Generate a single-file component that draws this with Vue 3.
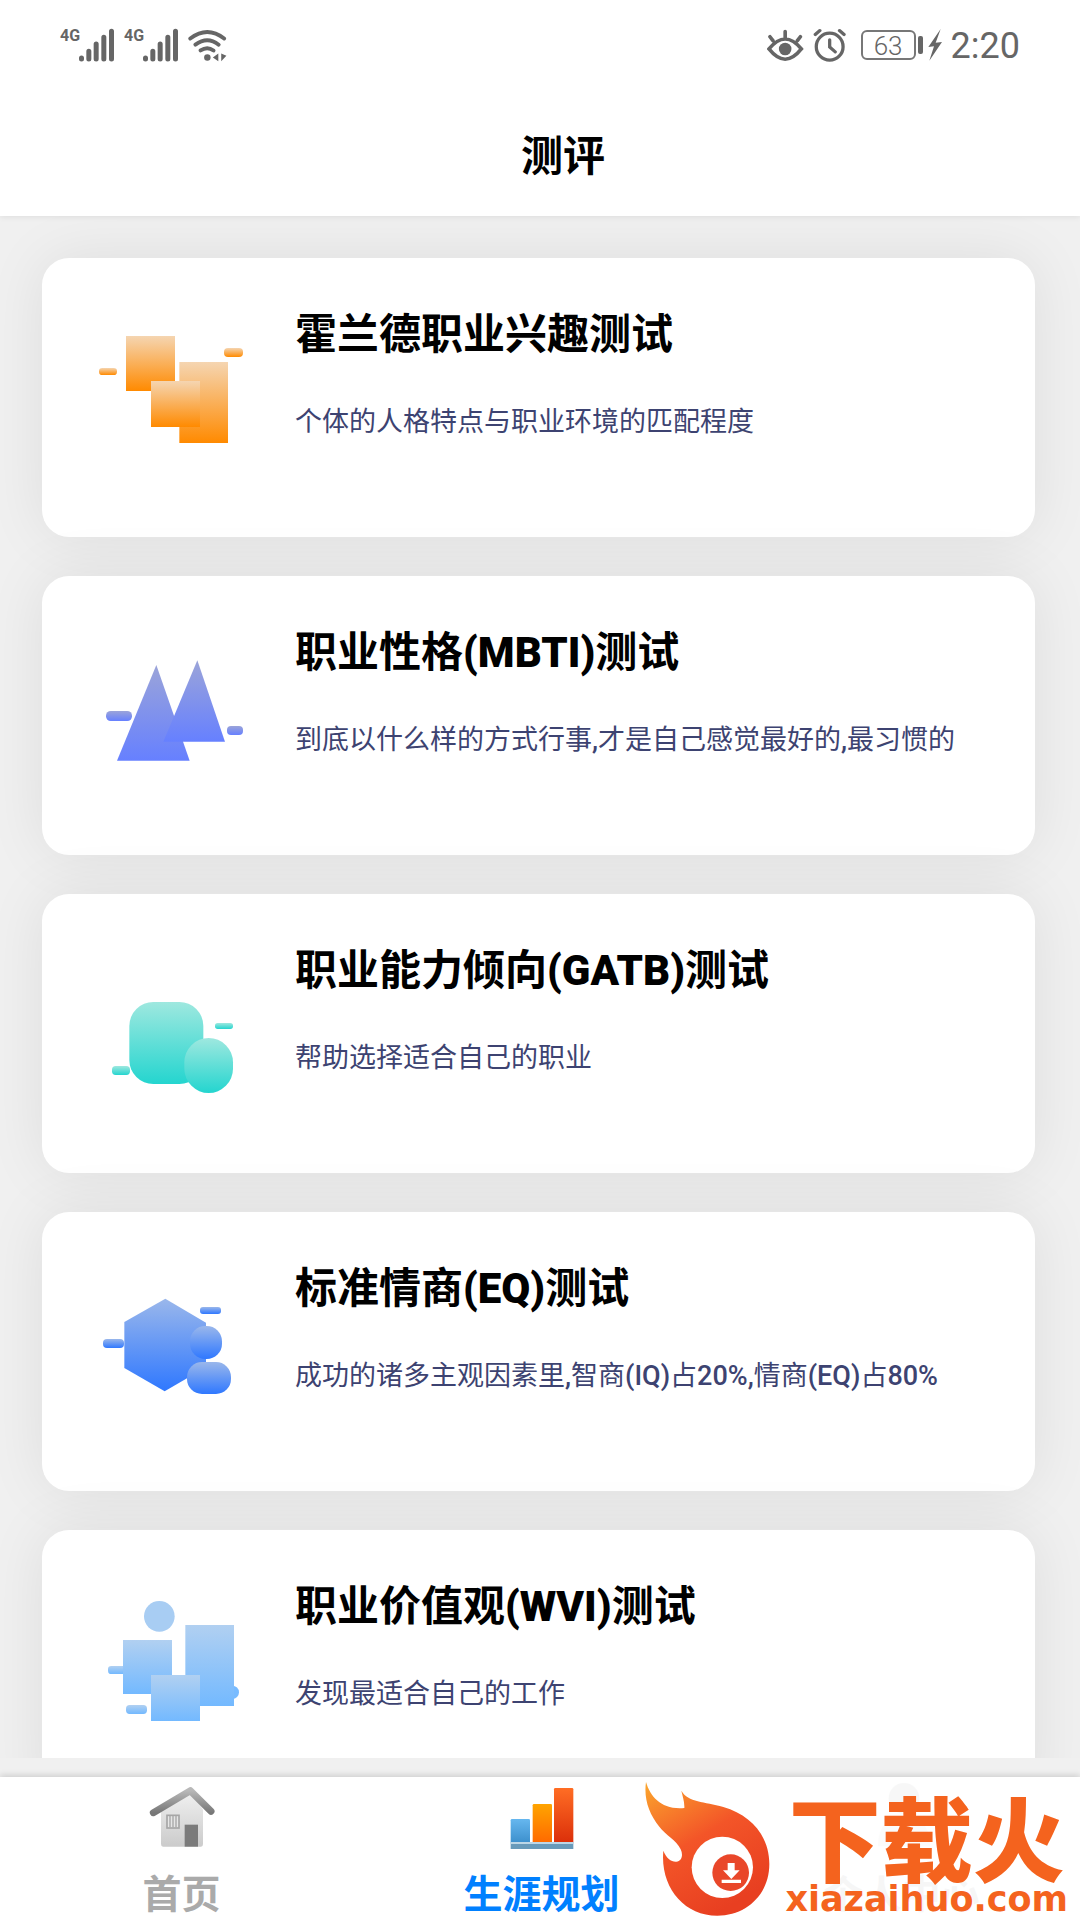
<script setup>
import { ref } from 'vue'

const tests = [
  { icon: 'holland', title: '霍兰德职业兴趣测试', desc: '个体的人格特点与职业环境的匹配程度' },
  { icon: 'mbti', title: '职业性格(MBTI)测试', desc: '到底以什么样的方式行事,才是自己感觉最好的,最习惯的' },
  { icon: 'gatb', title: '职业能力倾向(GATB)测试', desc: '帮助选择适合自己的职业' },
  { icon: 'eq', title: '标准情商(EQ)测试', desc: '成功的诸多主观因素里,智商(IQ)占20%,情商(EQ)占80%' },
  { icon: 'wvi', title: '职业价值观(WVI)测试', desc: '发现最适合自己的工作' },
]

const tabs = [
  { key: 'home', label: '首页' },
  { key: 'career', label: '生涯规划' },
  { key: 'mine', label: '个人中心' },
]

const activeTab = ref('career')

// latin letters and digits are set heavier than the Chinese text around them
function splitText(text) {
  return text.match(/[\x20-\x7e]+|[^\x20-\x7e]+/g).map((part) => ({
    text: part,
    latin: /^[\x20-\x7e]/.test(part),
  }))
}
</script>

<template>
  <div class="page">
    <header class="header">
      <div class="status-bar">
        <div class="status-group">
          <div v-for="n in 2" :key="n" class="signal">
            <span class="network">4G</span>
            <svg class="bars" viewBox="0 0 108 102" stroke="#666" stroke-width="15" stroke-linecap="round">
              <path d="M9 90v3M31 70v23M53 48v45M76 28v65M99 10v83" />
            </svg>
          </div>
          <svg class="wifi" viewBox="442 50 124 104" fill="none" stroke="#666" stroke-width="12" stroke-linecap="round">
            <path d="M449 82q53-40 105 0M465 101q37-27 72 0M481 119q21-14 40 0" />
            <circle cx="502" cy="141" r="10" fill="#666" stroke="none" />
            <path d="M536 128v24l-17-11zM545 128v24l16-17z" fill="#666" stroke="none" />
          </svg>
        </div>
        <div class="status-group right">
          <svg class="eye" viewBox="74 54 112 102" fill="none" stroke="#666" stroke-width="11" stroke-linecap="round">
            <path d="M80 117q49-60 98 0q-49 62-98 0zM129 64v20M83 80l9 12M175 80l-9 12" />
            <circle cx="129" cy="117" r="19" fill="#666" stroke="none" />
          </svg>
          <svg class="alarm" viewBox="218 54 102 104" fill="none" stroke="#666" stroke-width="10" stroke-linecap="round">
            <circle cx="268" cy="111" r="41" />
            <path d="M268 90v22l17 15M224 74l14-12M298 62l14 12" />
          </svg>
          <span class="battery">
            <span class="battery-level">63</span>
            <span class="battery-tip"></span>
          </span>
          <svg class="bolt" viewBox="566 58 42 96">
            <path d="M604 58l-37 54 17-2-14 43 38-56-19 2z" fill="#666" />
          </svg>
          <span class="clock">2:20</span>
        </div>
      </div>
      <h1 class="page-title">测评</h1>
    </header>

    <main class="test-list">
      <article v-for="item in tests" :key="item.icon" class="test-card">
        <svg v-if="item.icon === 'holland'" class="test-icon" viewBox="0 0 540 540">
          <defs>
            <linearGradient id="orange" x2="0" y2="1">
              <stop offset="0" stop-color="#f5d5b1" />
              <stop offset="1" stop-color="#ff8a00" />
            </linearGradient>
          </defs>
          <g fill="url(#orange)" transform="translate(-30 6)">
            <rect x="138" y="78" width="147" height="165" />
            <rect x="298" y="156" width="146" height="243" />
            <rect x="213" y="213" width="147" height="138" />
            <rect x="57" y="174" width="54" height="21" rx="10" />
            <rect x="432" y="114" width="57" height="27" rx="12" />
          </g>
        </svg>
        <svg v-else-if="item.icon === 'mbti'" class="test-icon" viewBox="0 0 540 540">
          <defs>
            <linearGradient id="violet" x2="0" y2="1">
              <stop offset="0" stop-color="#9ba4d9" />
              <stop offset="1" stop-color="#6680ff" />
            </linearGradient>
          </defs>
          <g fill="url(#violet)" transform="translate(0 42)">
            <path d="M199 75l100 287H81z" />
            <path d="M322 61l83 244H220z" />
            <rect x="48" y="213" width="78" height="30" rx="14" />
            <rect x="411" y="258" width="48" height="27" rx="12" />
          </g>
        </svg>
        <svg v-else-if="item.icon === 'gatb'" class="test-icon" viewBox="0 0 540 540">
          <defs>
            <linearGradient id="teal" x2="0" y2="1">
              <stop offset="0" stop-color="#9ee8df" />
              <stop offset="1" stop-color="#24d5cf" />
            </linearGradient>
          </defs>
          <g fill="url(#teal)" transform="translate(0 108)">
            <rect x="118" y="66" width="222" height="246" rx="72" />
            <rect x="283" y="174" width="146" height="165" rx="73" />
            <rect x="375" y="129" width="54" height="18" rx="8" />
            <rect x="66" y="258" width="54" height="27" rx="11" />
          </g>
        </svg>
        <svg v-else-if="item.icon === 'eq'" class="test-icon" viewBox="0 0 540 540">
          <defs>
            <linearGradient id="blue" x2="0" y2="1">
              <stop offset="0" stop-color="#9ab7eb" />
              <stop offset="1" stop-color="#2f78ff" />
            </linearGradient>
          </defs>
          <g fill="url(#blue)" transform="translate(0 54)">
            <path d="M226 56l122 72v134l-124 72-121-70V126z" />
            <rect x="300" y="138" width="96" height="99" rx="46" />
            <rect x="291" y="246" width="132" height="96" rx="45" />
            <rect x="330" y="81" width="63" height="21" rx="9" />
            <rect x="39" y="177" width="63" height="27" rx="12" />
          </g>
        </svg>
        <svg v-else class="test-icon" viewBox="0 0 540 540">
          <defs>
            <linearGradient id="sky" x2="0" y2="1">
              <stop offset="0" stop-color="#b1d0f1" />
              <stop offset="1" stop-color="#73b9ff" />
            </linearGradient>
          </defs>
          <circle cx="208" cy="109" r="46" fill="#a8cdf3" />
          <circle cx="427" cy="337" r="20" fill="#78bbff" />
          <g fill="url(#sky)">
            <rect x="54" y="258" width="66" height="24" rx="10" />
            <rect x="99" y="180" width="147" height="162" />
            <rect x="286" y="135" width="146" height="243" />
            <rect x="183" y="285" width="147" height="138" />
            <rect x="108" y="375" width="63" height="27" rx="11" />
          </g>
        </svg>
        <div class="test-info">
          <h2 class="test-title">
            <span v-for="(part, i) in splitText(item.title)" :key="i" :class="{ latin: part.latin }">{{ part.text }}</span>
          </h2>
          <p class="test-desc">
            <span v-for="(part, i) in splitText(item.desc)" :key="i" :class="{ latin: part.latin }">{{ part.text }}</span>
          </p>
        </div>
      </article>
    </main>

    <nav class="tab-bar">
      <button
        v-for="tab in tabs"
        :key="tab.key"
        class="tab"
        :class="{ active: activeTab === tab.key, faded: tab.key === 'mine' }"
        @click="activeTab = tab.key"
      >
        <svg v-if="tab.key === 'home'" class="tab-icon" viewBox="0 0 204 204">
          <defs>
            <linearGradient id="wall" x2="0" y2="1">
              <stop offset="0" stop-color="#f2f2f2" />
              <stop offset="1" stop-color="#cbcbcb" />
            </linearGradient>
            <linearGradient id="roof" x2="0" y2="1">
              <stop offset="0" stop-color="#b8b8b8" />
              <stop offset="1" stop-color="#777" />
            </linearGradient>
          </defs>
          <path d="M39 80l88-60 38 60v103q0 8-6 8H45q-6 0-6-8z" fill="url(#wall)" />
          <path d="M16 89L127 23l62 62" fill="none" stroke="url(#roof)" stroke-width="21" stroke-linecap="round" stroke-linejoin="round" />
          <rect x="110" y="125" width="40" height="66" fill="#7b7b7b" />
          <rect x="57" y="97" width="36" height="38" fill="#e6e6e6" stroke="#a6a6a6" stroke-width="5" />
          <path d="M66 99v34M75 99v34M84 99v34" stroke="#a6a6a6" stroke-width="4" />
        </svg>
        <svg v-else-if="tab.key === 'career'" class="tab-icon" viewBox="0 0 204 204">
          <defs>
            <linearGradient id="bar-low" x2="0" y2="1">
              <stop offset="0" stop-color="#66b7ef" />
              <stop offset="1" stop-color="#3c8fcc" />
            </linearGradient>
            <linearGradient id="bar-mid" x2="0" y2="1">
              <stop offset="0" stop-color="#ffa400" />
              <stop offset="1" stop-color="#ff6900" />
            </linearGradient>
            <linearGradient id="bar-high" x2="0" y2="1">
              <stop offset="0" stop-color="#ff6d24" />
              <stop offset="1" stop-color="#db2f0a" />
            </linearGradient>
          </defs>
          <rect x="8" y="108" width="58" height="72" rx="4" fill="url(#bar-low)" />
          <rect x="74" y="63" width="58" height="117" rx="4" fill="url(#bar-mid)" />
          <rect x="138" y="15" width="58" height="165" rx="4" fill="url(#bar-high)" />
          <rect x="8" y="177" width="188" height="21" fill="#689aba" />
          <rect x="8" y="177" width="188" height="6" fill="#bcd6e6" />
        </svg>
        <svg v-else class="tab-icon" viewBox="0 0 204 204">
          <circle cx="108" cy="46" r="46" fill="#bbb" />
          <path d="M30 190q0-88 78-88t78 88z" fill="#ddd" />
        </svg>
        <span>{{ tab.label }}</span>
      </button>

      <div class="brand">
        <svg class="brand-flame" viewBox="60 120 384 408">
          <defs>
            <linearGradient id="flame" x1="0" y1="0" x2=".55" y2="1">
              <stop offset="0" stop-color="#fba62d" />
              <stop offset=".5" stop-color="#f35528" />
              <stop offset="1" stop-color="#e83f21" />
            </linearGradient>
          </defs>
          <path
            d="M69 123C82 168 116 207 184 201C185 181 178 164 175 149C196 185 244 181 301 198C384 222 439 285 439 369C439 460 370 524 283 524C181 524 111 436 121 329C130 352 145 363 160 362C177 360 181 341 173 325C160 296 128 283 109 257C77 218 62 172 69 123z"
            fill="url(#flame)"
          />
          <circle cx="298" cy="379" r="92" fill="#fff" />
          <circle cx="323" cy="395" r="55" fill="#e9472a" />
          <path d="M314 366h21v22h15l-25 26-25-26h14zM296 416h58v10h-58z" fill="#fff" />
        </svg>
        <div class="brand-text">
          <span class="brand-name">下载火</span>
          <span class="brand-site">xiazaihuo.com</span>
        </div>
      </div>
    </nav>
  </div>
</template>

<style>
body {
  margin: 0;
  background: #f0f0f0;
}
</style>

<style scoped>
.page {
  height: 100vh;
  display: flex;
  flex-direction: column;
  overflow: hidden;
  background: #f0f0f0;
  font-family: Roboto, 'Noto Sans CJK SC', sans-serif;
}
.header {
  position: relative;
  z-index: 1;
  background: #fff;
  padding-bottom: 26px;
  box-shadow: 0 1px 6px rgba(0, 0, 0, 0.08);
}
.status-bar {
  display: flex;
  justify-content: space-between;
  height: 90px;
  padding: 0 60px;
  color: #666;
}
.status-group {
  display: flex;
  align-items: center;
  gap: 9px;
}
.signal {
  display: flex;
  align-items: flex-start;
}
.network {
  width: 18px;
  font-family: 'Liberation Sans Narrow', Roboto, sans-serif;
  font-size: 16px;
  line-height: 16px;
  font-weight: 700;
}
.bars { width: 37px; height: 34px; }
.wifi { width: 40px; height: 34px; }
.eye { width: 37px; height: 34px; }
.alarm { width: 34px; height: 34px; margin-right: 5px; }
.battery {
  display: flex;
  align-items: center;
  gap: 2px;
}
.battery-level {
  width: 51px;
  height: 26px;
  border: 2px solid #777;
  border-radius: 6px;
  font-size: 26px;
  line-height: 28px;
  font-weight: 300;
  text-align: center;
}
.battery-tip {
  width: 5px;
  height: 18px;
  border-radius: 2px;
  background: #666;
}
.bolt { width: 14px; height: 32px; margin-left: -4px; }
.clock {
  font-size: 36px;
  line-height: 40px;
  font-weight: 400;
  padding-top: 2px;
}
.page-title {
  margin: 0;
  padding: 34px 0 0 46px;
  font-size: 42px;
  line-height: 66px;
  font-weight: 700;
  text-align: center;
}
.test-list {
  flex: 1;
  min-height: 0;
  overflow: hidden;
  display: flex;
  flex-direction: column;
  gap: 39px;
  padding: 42px 45px 0 42px;
  margin-bottom: 19px;
}
.test-card {
  flex: none;
  display: flex;
  gap: 24px;
  box-sizing: border-box;
  height: 279px;
  padding: 50px 48px 0;
  background: #fff;
  border-radius: 27px;
  box-shadow: 0 0 60px rgba(0, 0, 0, 0.08);
}
.test-icon {
  flex: none;
  width: 180px;
  height: 180px;
}
.test-info {
  min-width: 0;
  padding: 2px 0 0 1px;
  white-space: nowrap;
}
.test-title {
  margin: 0 0 42px;
  font-size: 42px;
  line-height: 50px;
  font-weight: 700;
  color: #000;
}
.test-title .latin { font-weight: 900; }
.test-desc {
  margin: 0;
  font-size: 27px;
  line-height: 40px;
  font-weight: 400;
  color: #3d4371;
}
.test-desc .latin { font-weight: 500; }
.tab-bar {
  position: relative;
  display: flex;
  height: 143px;
  background: #fff;
  box-shadow: 0 -2px 6px rgba(0, 0, 0, 0.14);
}
.tab {
  flex: 1;
  display: flex;
  flex-direction: column;
  align-items: center;
  gap: 20px;
  padding: 6px 0 0 3px;
  border: none;
  background: none;
  color: #aaa;
  font-family: inherit;
  font-size: 39px;
  line-height: 48px;
  font-weight: 700;
  cursor: pointer;
}
.tab.active { color: #0080ff; }
.tab.faded { opacity: 0.1; }
.tab-icon { width: 68px; height: 68px; }
.brand {
  position: absolute;
  right: 12px;
  bottom: 3px;
  display: flex;
  align-items: flex-end;
  gap: 14px;
  color: #f4631e;
  pointer-events: none;
}
.brand-flame { width: 128px; height: 136px; }
.brand-text {
  display: flex;
  flex-direction: column;
  align-items: center;
}
.brand-name {
  font-family: 'Noto Sans CJK SC', sans-serif;
  font-size: 92px;
  line-height: 92px;
  font-weight: 900;
}
.brand-site {
  font-family: 'DejaVu Sans', sans-serif;
  font-size: 35px;
  line-height: 36px;
  font-weight: 700;
}
</style>
